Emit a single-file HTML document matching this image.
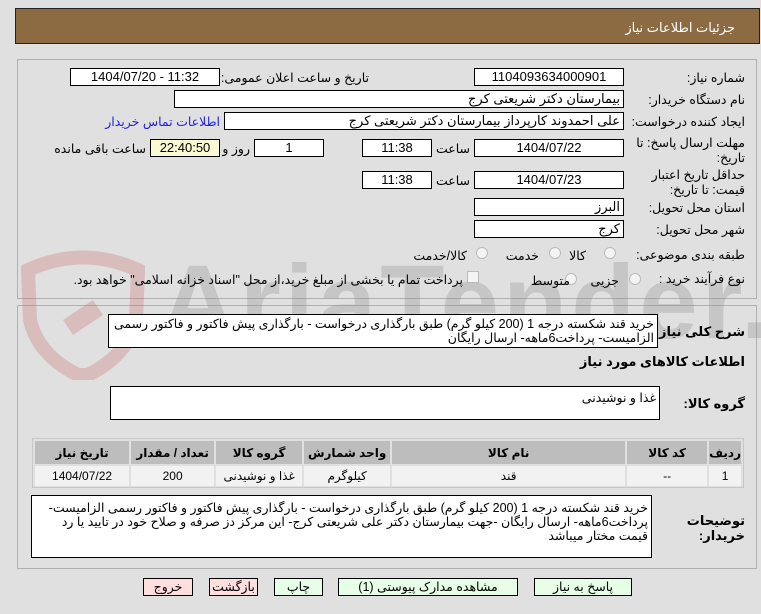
<!DOCTYPE html>
<html><head><meta charset="utf-8"><style>
body{margin:0;width:761px;height:614px;background:#e0e0e0;font-family:"Liberation Sans","DejaVu Sans",sans-serif;font-size:12px;color:#000;position:relative;overflow:hidden}
.a{position:absolute;white-space:nowrap}
.in{position:absolute;background:#fff;border:1px solid #000;box-sizing:border-box;height:18px;line-height:16px;text-align:center;font-size:13px}
.r{text-align:right;direction:rtl;padding-right:3px}
.l{position:absolute;direction:rtl;text-align:right;white-space:nowrap;font-size:12.5px;line-height:14px}
.ta{position:absolute;background:#fff;border:1px solid #000;box-sizing:border-box;direction:rtl;padding:1px 3px;line-height:14px;font-size:12.5px}
.rad{position:absolute;width:10px;height:10px;border:1px solid #bbb;border-radius:50%;background:#f4f4f4}
.btn{position:absolute;height:18px;border:1px solid #000;box-sizing:border-box;text-align:center;line-height:16px;font-size:12.5px;direction:rtl}
table{border-collapse:separate;border-spacing:2px}
td{text-align:center;font-size:12px;padding:0}
</style></head><body>
<div class="a" style="left:15px;top:8px;width:745px;height:36px;background:#8c6a42;border:1px solid #222;box-sizing:border-box"></div>
<div class="l" style="right:26px;top:21px;color:#fff;font-size:13px">جزئیات اطلاعات نیاز</div>
<div class="a" style="left:17px;top:59px;width:740px;height:240px;border:1px solid #b0b0b0;box-sizing:border-box"></div>
<div class="a" style="left:17px;top:305px;width:740px;height:264px;border:1px solid #b0b0b0;box-sizing:border-box"></div>
<!-- watermark -->
<svg class="a" style="left:18px;top:250px" width="130" height="130" viewBox="0 0 130 130"><path d="M10 20 Q65 -5 120 20 L118 70 Q110 105 70 125 L60 125 Q20 105 12 70 Z" fill="none" stroke="rgba(200,100,100,0.28)" stroke-width="14"/><path d="M45 70 L75 50 L85 65 L55 85 Z" fill="rgba(200,100,100,0.28)"/></svg>
<div class="a" style="left:160px;top:248px;font-family:'Liberation Sans Narrow','Liberation Sans',sans-serif;font-size:105px;font-weight:bold;color:rgba(140,140,140,0.3);line-height:110px;letter-spacing:4px">AriaTender.net</div>

<div class="l" style="right:16px;top:71px">شماره نیاز:</div>
<div class="in" style="left:474px;top:68px;width:150px">1104093634000901</div>
<div class="l" style="right:392px;top:71px">تاریخ و ساعت اعلان عمومی:</div>
<div class="in" style="left:70px;top:68px;width:150px">1404/07/20 - 11:32</div>

<div class="l" style="right:16px;top:93px">نام دستگاه خریدار:</div>
<div class="in r" style="left:174px;top:90px;width:450px">بیمارستان دکتر شریعتی کرج</div>

<div class="l" style="right:16px;top:115px">ایجاد کننده درخواست:</div>
<div class="in r" style="left:224px;top:112px;width:400px">علی احمدوند کارپرداز بیمارستان دکتر شریعتی کرج</div>
<div class="l" style="right:541px;top:115px;color:#2222dd">اطلاعات تماس خریدار</div>

<div class="l" style="right:16px;top:136px;line-height:15px">مهلت ارسال پاسخ: تا<br>تاریخ:</div>
<div class="in" style="left:474px;top:139px;width:150px">1404/07/22</div>
<div class="l" style="right:291px;top:142px">ساعت</div>
<div class="in" style="left:362px;top:139px;width:70px">11:38</div>
<div class="in" style="left:254px;top:139px;width:70px">1</div>
<div class="l" style="right:511px;top:142px">روز و</div>
<div class="in" style="left:150px;top:139px;width:70px;background:#fafad2">22:40:50</div>
<div class="l" style="right:615px;top:142px">ساعت باقی مانده</div>

<div class="l" style="right:16px;top:168px;line-height:15px">حداقل تاریخ اعتبار<br>قیمت: تا تاریخ:</div>
<div class="in" style="left:474px;top:171px;width:150px">1404/07/23</div>
<div class="l" style="right:291px;top:174px">ساعت</div>
<div class="in" style="left:362px;top:171px;width:70px">11:38</div>

<div class="l" style="right:16px;top:201px">استان محل تحویل:</div>
<div class="in r" style="left:474px;top:198px;width:150px">البرز</div>
<div class="l" style="right:16px;top:223px">شهر محل تحویل:</div>
<div class="in r" style="left:474px;top:220px;width:150px">کرج</div>

<div class="l" style="right:16px;top:248px">طبقه بندی موضوعی:</div>
<div class="rad" style="left:604px;top:247px"></div><div class="l" style="right:175px;top:249px">کالا</div>
<div class="rad" style="left:549px;top:247px"></div><div class="l" style="right:222px;top:249px">خدمت</div>
<div class="rad" style="left:476px;top:247px"></div><div class="l" style="right:294px;top:249px">کالا/خدمت</div>

<div class="l" style="right:16px;top:272px">نوع فرآیند خرید :</div>
<div class="rad" style="left:629px;top:273px"></div><div class="l" style="right:142px;top:274px">جزیی</div>
<div class="rad" style="left:565px;top:273px"></div><div class="l" style="right:191px;top:274px">متوسط</div>
<div class="a" style="left:467px;top:271px;width:10px;height:10px;border:1px solid #bbb;background:#f4f4f4"></div>
<div class="l" style="right:298px;top:273px">پرداخت تمام یا بخشی از مبلغ خرید،از محل "اسناد خزانه اسلامی" خواهد بود.</div>

<div class="l" style="right:16px;top:325px;font-weight:bold;font-size:13px">شرح کلی نیاز:</div>
<div class="ta" style="left:108px;top:314px;width:550px;height:34px;padding-top:2px">خرید قند شکسته درجه 1 (200 کیلو گرم)  طبق بارگذاری درخواست  - بارگذاری  پیش فاکتور و فاکتور رسمی الزامیست- پرداخت6ماهه- ارسال رایگان</div>
<div class="l" style="right:16px;top:355px;font-weight:bold;font-size:13px">اطلاعات کالاهای مورد نیاز</div>
<div class="l" style="right:16px;top:397px;font-weight:bold;font-size:13px">گروه کالا:</div>
<div class="ta" style="left:110px;top:386px;width:550px;height:34px;padding-top:4px">غذا و نوشیدنی</div>

<div class="a" style="left:32px;top:438px;width:712px;height:50px;border:1px solid #c8c8c8;box-sizing:border-box"></div>
<table class="a" style="left:33px;top:439px;width:710px;direction:rtl">
<tr style="background:#bdbdbd;font-weight:bold;height:23px"><td style="width:26px">ردیف</td><td style="width:80px">کد کالا</td><td style="width:233px">نام کالا</td><td style="width:86px">واحد شمارش</td><td style="width:86px">گروه کالا</td><td style="width:83px">تعداد / مقدار</td><td>تاریخ نیاز</td></tr>
<tr style="background:#f2f2f2;height:20px"><td>1</td><td>--</td><td>قند</td><td>کیلوگرم</td><td>غذا و نوشیدنی</td><td>200</td><td>1404/07/22</td></tr>
</table>

<div class="l" style="right:16px;top:513px;font-weight:bold;font-size:13px;line-height:15px">توضیحات<br>خریدار:</div>
<div class="ta" style="left:31px;top:495px;width:621px;height:63px;padding-top:5px">خرید قند شکسته درجه 1 (200 کیلو گرم)  طبق بارگذاری درخواست  - بارگذاری  پیش فاکتور و فاکتور رسمی الزامیست- پرداخت6ماهه- ارسال رایگان -جهت بیمارستان دکتر علی شریعتی کرج- این مرکز دز صرفه و صلاح خود در تایید یا رد قیمت مختار میباشد</div>

<div class="btn" style="left:534px;top:578px;width:98px;background:#e6ffe6">پاسخ به نیاز</div>
<div class="btn" style="left:338px;top:578px;width:180px;background:#e6ffe6">مشاهده مدارک پیوستی (1)</div>
<div class="btn" style="left:274px;top:578px;width:49px;background:#e6ffe6">چاپ</div>
<div class="btn" style="left:209px;top:578px;width:49px;background:#ffdede">بازگشت</div>
<div class="btn" style="left:143px;top:578px;width:50px;background:#ffdede">خروج</div>
</body></html>
